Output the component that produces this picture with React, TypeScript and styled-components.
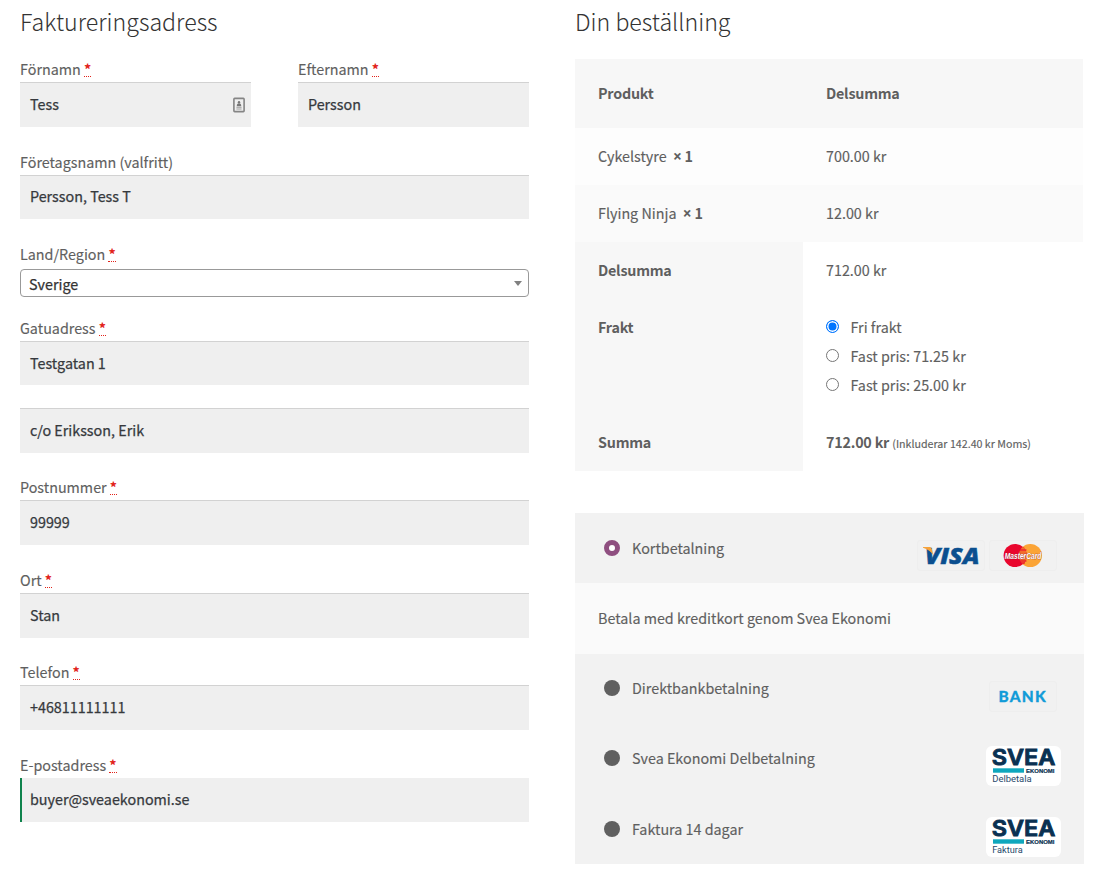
import React from "react";
import styled, { createGlobalStyle } from "styled-components";

const Global = createGlobalStyle`
  * { box-sizing: border-box; }
  body {
    margin: 0;
    background: #fff;
    color: #5f5f5f;
    font-family: "Noto Sans CJK SC", "Open Sans", sans-serif;
    font-size: 14.33px;
    line-height: 24px;
    font-kerning: normal;
    -webkit-text-stroke: 0.15px currentColor;
  }
  svg { -webkit-text-stroke: 0; }
`;

const Page = styled.main`
  display: grid;
  grid-template-columns: 509px 509px;
  column-gap: 46px;
  padding: 0 0 0 20px;
  width: 1102px;
  height: 875px;
  overflow: hidden;
`;

const Column = styled.section`
  display: flex;
  flex-direction: column;
`;

const Heading = styled.h3`
  margin: 0;
  height: 59px;
  padding-top: 1px;
  font-size: 23.2px;
  line-height: 40px;
  font-weight: 300;
  color: #333;
  white-space: nowrap;
  -webkit-text-stroke: 0;
`;

const NameRow = styled.div`
  display: grid;
  grid-template-columns: 231px 231px;
  justify-content: space-between;
`;

const Field = styled.div<{ $gap?: number }>`
  display: flex;
  flex-direction: column;
  margin-bottom: ${(p) => p.$gap ?? 0}px;
`;

const Label = styled.label<{ $space?: number }>`
  height: 23px;
  line-height: 20px;
  margin-bottom: ${(p) => p.$space ?? 0}px;
  white-space: pre;
`;

const Required = styled.abbr`
  color: #e2231a;
  font-weight: 700;
  text-decoration: none;
  display: inline-block;
  height: 18px;
  line-height: 20px;
  border-bottom: 1px dotted #e2231a;
  vertical-align: top;
  -webkit-text-stroke: 0;
`;

const Input = styled.div<{ $h?: number; $valid?: boolean; $lift?: number }>`
  display: flex;
  align-items: center;
  justify-content: space-between;
  height: ${(p) => p.$h ?? 45}px;
  padding: 0 6px ${(p) => p.$lift ?? 2}px ${(p) => (p.$valid ? 8 : 10)}px;
  background: #efefef;
  color: #36393d;
  -webkit-text-stroke: 0.25px currentColor;
  border-top: ${(p) => (p.$valid ? "0" : "1px solid #d2d2d2")};
  border-left: ${(p) => (p.$valid ? "2px solid #0f834d" : "0")};
`;

const Select = styled.div`
  display: flex;
  align-items: center;
  justify-content: space-between;
  height: 28px;
  padding: 1px 6px 0 8px;
  border: 1px solid #999;
  border-radius: 4px;
  color: #333;
  -webkit-text-stroke: 0.25px currentColor;
`;

const Caret = styled.span`
  width: 0;
  height: 0;
  border: 4px solid transparent;
  border-top: 5px solid #808080;
  border-bottom: 0;
`;

const Table = styled.div`
  width: 508px;
  margin-bottom: 42px;
`;

const Row = styled.div<{ $h?: number; $bg?: string }>`
  display: grid;
  grid-template-columns: 228px 1fr;
  height: ${(p) => p.$h ?? 57}px;
  background: ${(p) => p.$bg ?? "transparent"};
`;

const Cell = styled.div<{ $head?: boolean; $pad?: number }>`
  padding: ${(p) => p.$pad ?? 16}px 0 0 23px;
  background: ${(p) => (p.$head ? "#f7f7f7" : "transparent")};
  white-space: pre;
`;

const Strong = styled.strong`
  font-weight: 700;
  letter-spacing: -0.22px;
  -webkit-text-stroke: 0;
`;

const Times = styled.span`
  font-family: "Open Sans", sans-serif;
  font-size: 15.5px;
  line-height: 1;
`;

const Small = styled.small`
  font-size: 10.68px;
`;

const Option = styled.div`
  display: flex;
  height: 29px;
`;

const Radio = styled.span<{ $on?: boolean }>`
  width: 13px;
  height: 13px;
  margin: 5px 11.5px 0 0;
  border: 1px solid ${(p) => (p.$on ? "#0075ff" : "#767676")};
  border-radius: 50%;
  background: ${(p) => (p.$on ? "#0075ff" : "#fff")};
  box-shadow: inset 0 0 0 1.5px #fff;
`;

const Payments = styled.div`
  background: #f2f2f2;
  height: 351px;
`;

const Method = styled.div<{ $h?: number }>`
  display: flex;
  height: ${(p) => p.$h ?? 70}px;
  padding-left: 29px;
`;

const Dot = styled.span<{ $on?: boolean; $top?: number }>`
  width: 16px;
  height: 16px;
  margin: ${(p) => p.$top ?? 26}px 12px 0 0;
  border-radius: 50%;
  background: ${(p) => (p.$on ? "#fff" : "#606060")};
  border: ${(p) => (p.$on ? "5.3px solid #8f4f80" : "0")};
`;

const MethodName = styled.span<{ $top?: number }>`
  padding-top: ${(p) => p.$top ?? 22}px;
  flex: 1;
`;

const Description = styled.div`
  height: 71px;
  padding: 23px 23px 0;
  background: #fafafa;
`;

const Logos = styled.div<{ $top: number; $right: number }>`
  display: flex;
  gap: 4px;
  padding: ${(p) => p.$top}px ${(p) => p.$right}px 0 0;
`;

const CardFrame = styled.svg`
  display: block;
  width: 68px;
  height: 31px;
  border: 1px solid #eeeeee;
  border-radius: 3px;
  background: #f1f1f1;
`;

const SveaFrame = styled.svg`
  display: block;
  width: 75px;
  height: 40px;
  border-radius: 6px;
  background: #fff;
`;

const IconSvg = styled.svg`
  display: block;
  margin-top: 2px;
`;

const ContactIcon = () => (
  <IconSvg width="12" height="16" viewBox="0 0 12 16">
    <rect x="0.9" y="1.4" width="10.2" height="13.2" rx="0.8" fill="#efefef" stroke="#858585" strokeWidth="1.6" />
    <circle cx="6" cy="5.3" r="1.2" fill="#777" />
    <path d="M3.8 9.2V8.4C3.8 7 5 6.3 6 6.3S8.2 7 8.2 8.4v.8z" fill="#777" />
    <path d="M3.4 10.3h5.2M3.4 12h5.2" stroke="#a0a0a0" strokeWidth="1" />
  </IconSvg>
);

const Visa = () => (
  <CardFrame viewBox="0 0 66 29">
    <text x="7" y="23" textLength="54.5" lengthAdjust="spacingAndGlyphs" fontFamily="Open Sans, sans-serif" fontWeight="800" fontStyle="italic" fontSize="23.5" fill="#0b4f8f" stroke="#0b4f8f" strokeWidth="0.5">VISA</text>
    <path d="M5 6h6.6q1.7 0 2.1 1.7l1.7 6.6Q12 8.9 5 6.8z" fill="#f6a23a" />
  </CardFrame>
);

const MasterCard = () => (
  <CardFrame viewBox="0 0 66 29">
    <circle cx="40.3" cy="14.5" r="11.6" fill="#fba436" />
    <circle cx="25.2" cy="14.5" r="11.6" fill="#e9062d" />
    <path d="M32.8 5.7a11.6 11.6 0 0 1 0 17.6 11.6 11.6 0 0 1 0-17.6" fill="#f26b2c" />
    <path d="M29.5 9h7M29 20h7.5M30.5 22h4.5" stroke="#e9062d" strokeWidth="1" />
    <text x="14.8" y="17.5" textLength="36.5" lengthAdjust="spacingAndGlyphs" fontFamily="Liberation Sans, sans-serif" fontWeight="700" fontStyle="italic" fontSize="8.6" fill="#fff" stroke="#8d2430" strokeWidth="0.5" paintOrder="stroke">MasterCard</text>
  </CardFrame>
);

const Bank = () => (
  <CardFrame viewBox="0 0 66 29">
    <text x="8.6" y="20.2" textLength="47" fontFamily="Lato, sans-serif" fontWeight="900" fontSize="15.4" fill="#119bd8" stroke="#119bd8" strokeWidth="0.3">BANK</text>
  </CardFrame>
);

const Svea = ({ caption, width }: { caption: string; width: number }) => (
  <SveaFrame viewBox="0 0 75 40">
    <text x="5.8" y="19.4" textLength="63.5" lengthAdjust="spacingAndGlyphs" fontFamily="Inter, sans-serif" fontWeight="600" fontSize="21.3" fill="#0a3152" stroke="#0a3152" strokeWidth="0.9">SVEA</text>
    <rect x="7" y="22.3" width="31" height="4.4" fill="#0fa7bd" />
    <text x="40" y="26.7" textLength="28.5" lengthAdjust="spacingAndGlyphs" fontFamily="Liberation Sans, sans-serif" fontWeight="700" fontSize="5.5" fill="#0a3152" stroke="#0a3152" strokeWidth="0.2">EKONOMI</text>
    <text x="6.2" y="36.4" textLength={width} lengthAdjust="spacingAndGlyphs" fontFamily="Roboto, sans-serif" fontSize="9.4" fill="#27496b">{caption}</text>
  </SveaFrame>
);

type EntryProps = {
  label?: string;
  value: string;
  required?: boolean;
  h?: number;
  gap?: number;
  lift?: number;
  valid?: boolean;
  icon?: boolean;
};

const Entry = ({ label, value, required, h, gap, lift, valid, icon }: EntryProps) => (
  <Field $gap={gap}>
    {label && <Label>{label}{required && <> <Required>*</Required></>}</Label>}
    <Input $h={h} $valid={valid} $lift={lift}>{value}{icon && <ContactIcon />}</Input>
  </Field>
);

const Quantity = () => <Strong>{"\u00a0"}<Times>×</Times> 1</Strong>;

export default function App() {
  return (
    <>
      <Global />
      <Page>
        <Column>
          <Heading>Faktureringsadress</Heading>
          <NameRow>
            <Entry label="Förnamn" value="Tess" required gap={25} icon />
            <Entry label="Efternamn" value="Persson" required gap={25} />
          </NameRow>
          <Entry label="Företagsnamn (valfritt)" value="Persson, Tess T" h={44} gap={25} lift={3} />
          <Field $gap={21}>
            <Label $space={2}>Land/Region <Required>*</Required></Label>
            <Select>Sverige<Caret /></Select>
          </Field>
          <Entry label="Gatuadress" value="Testgatan 1" required h={44} gap={23} lift={1} />
          <Entry value="c/o Eriksson, Erik" gap={24} />
          <Entry label="Postnummer" value="99999" required gap={25} />
          <Entry label="Ort" value="Stan" required gap={24} />
          <Entry label="Telefon" value="+46811111111" required gap={25} />
          <Entry label="E-postadress" value="buyer@sveaekonomi.se" required h={44} lift={2} valid />
        </Column>
        <Column>
          <Heading>Din beställning</Heading>
          <Table>
            <Row $h={69} $bg="#f7f7f7">
              <Cell $pad={22}><Strong>Produkt</Strong></Cell>
              <Cell $pad={22}><Strong>Delsumma</Strong></Cell>
            </Row>
            <Row $bg="#fdfdfd">
              <Cell>Cykelstyre <Quantity /></Cell>
              <Cell>700.00 kr</Cell>
            </Row>
            <Row $bg="#fafafa">
              <Cell>Flying Ninja <Quantity /></Cell>
              <Cell>12.00 kr</Cell>
            </Row>
            <Row>
              <Cell $head><Strong>Delsumma</Strong></Cell>
              <Cell>712.00 kr</Cell>
            </Row>
            <Row $h={115}>
              <Cell $head><Strong>Frakt</Strong></Cell>
              <Cell>
                <Option><Radio $on />Fri frakt</Option>
                <Option><Radio />Fast pris: 71.25 kr</Option>
                <Option><Radio />Fast pris: 25.00 kr</Option>
              </Cell>
            </Row>
            <Row>
              <Cell $head><Strong>Summa</Strong></Cell>
              <Cell><Strong>712.00 kr</Strong> <Small>(Inkluderar 142.40 kr Moms)</Small></Cell>
            </Row>
          </Table>
          <Payments>
            <Method>
              <Dot $on $top={27} />
              <MethodName $top={23}>Kortbetalning</MethodName>
              <Logos $top={27} $right={27}><Visa /><MasterCard /></Logos>
            </Method>
            <Description>Betala med kreditkort genom Svea Ekonomi</Description>
            <Method>
              <Dot />
              <MethodName>Direktbankbetalning</MethodName>
              <Logos $top={27} $right={27}><Bank /></Logos>
            </Method>
            <Method $h={71}>
              <Dot />
              <MethodName>Svea Ekonomi Delbetalning</MethodName>
              <Logos $top={22} $right={23}><Svea caption="Delbetala" width={39.5} /></Logos>
            </Method>
            <Method $h={69}>
              <Dot />
              <MethodName>Faktura 14 dagar</MethodName>
              <Logos $top={22} $right={23}><Svea caption="Faktura" width={30.5} /></Logos>
            </Method>
          </Payments>
        </Column>
      </Page>
    </>
  );
}
